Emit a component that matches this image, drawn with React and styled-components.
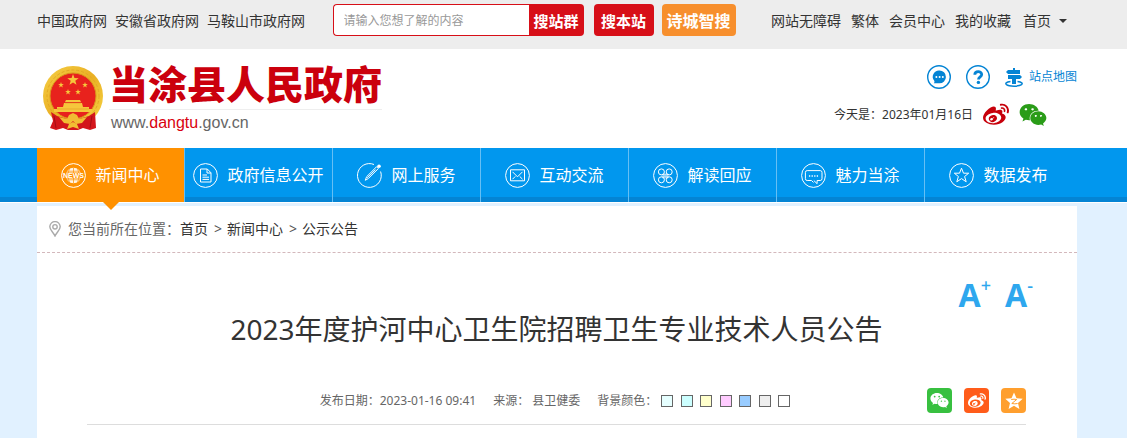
import styled, { createGlobalStyle } from "styled-components";
import { FaWeibo, FaWeixin } from "react-icons/fa";

const siteLinks = ["中国政府网", "安徽省政府网", "马鞍山市政府网"];
const userLinks = ["网站无障碍", "繁体", "会员中心", "我的收藏"];
const swatches = [
  { name: "浅青", color: "#e6ffff" },
  { name: "青色", color: "#ccffff" },
  { name: "黄色", color: "#ffffcc" },
  { name: "粉色", color: "#ffccff" },
  { name: "蓝色", color: "#99ccff" },
  { name: "灰色", color: "#eeeeee" },
  { name: "白色", color: "#ffffff" },
];

const GlobalStyle = createGlobalStyle`
  * {
    box-sizing: border-box;
  }
  body {
    margin: 0;
    background: #e1f1ff;
    color: #333;
    font: 14px/20px "Noto Sans", "Noto Sans CJK SC", sans-serif;
  }
  a {
    color: inherit;
    text-decoration: none;
  }
  button, input {
    font-family: inherit;
  }
  svg {
    display: block;
    flex: none;
  }
`;

const Star = ({ x, y, r }) => {
  const points = Array.from({ length: 10 }, (_, i) => {
    const d = i % 2 ? r * 0.4 : r;
    const a = (Math.PI / 5) * i - Math.PI / 2;
    return `${x + d * Math.cos(a)},${y + d * Math.sin(a)}`;
  }).join(" ");
  return <polygon points={points} />;
};

const Emblem = () => (
  <svg width="60" height="66" viewBox="0 0 60 66" aria-hidden="true">
    <defs>
      <linearGradient id="gold" x1="0" y1="0" x2="1" y2="1">
        <stop offset="0" stopColor="#f5cf45" />
        <stop offset="0.5" stopColor="#eab024" />
        <stop offset="1" stopColor="#f6d545" />
      </linearGradient>
    </defs>
    <circle cx="30" cy="30" r="30" fill="url(#gold)" />
    <circle cx="30" cy="30" r="26" fill="none" stroke="#e3a824" strokeWidth="1" strokeDasharray="3 2" />
    <circle cx="30" cy="30" r="23" fill="#e8221d" stroke="#d9971c" strokeWidth="1" />
    <g fill="#f6c63c">
      <Star x={30} y={14} r={6} />
      <Star x={18} y={19} r={3} />
      <Star x={42} y={19} r={3} />
      <Star x={25} y={26} r={3} />
      <Star x={35} y={26} r={3} />
      <path d="M23 34h14l1 2H22zM21 37h18l1 4H20zM14 41h32v2H14zM11 43h38v3H11z" />
    </g>
    <path d="M14 43h32M22 37h16" stroke="#e39b22" strokeWidth="0.6" />
    <path d="M8 46L14 50 24 53 30 49 36 53 46 50 52 46 53 62 47 64 40 62 35 64H25L20 62 13 64 7 62 10 55z" fill="#d3161c" />
    <path d="M16 51l8 2 2-4 4-2 4 2 2 4 8-2-5 6-6 1-3-3-3 3-6-1z" fill="#f1bd33" />
    <path d="M24 63l2-5 4-2 4 2 2 5-6-2z" fill="#f1bd33" />
    <path d="M11 50l2 12M49 50l-2 12" stroke="#a50e15" strokeWidth="1" />
  </svg>
);

const ring = <circle cx="12.5" cy="12.5" r="11.9" />;

const navIcons = {
  news: (
    <>
      {ring}
      <circle cx="12.5" cy="12.5" r="7.8" fill="currentColor" stroke="none" opacity="0.9" />
      <path d="M12.5 5v15M8.6 5.5c-2 4-2 10 0 14M16.4 5.5c2 4 2 10 0 14M5 8.2h15M5 16.8h15" stroke="#ff9100" strokeWidth="0.7" />
      <path d="M2.500 9.500h20v6h-20z" fill="#ff9100" stroke="none" />
      <text x="12.500" y="15" textAnchor="middle" fontSize="7" fontWeight="bold" fontFamily="Liberation Sans, sans-serif" fill="currentColor" stroke="none">
        NEWS
      </text>
    </>
  ),
  doc: (
    <>
      {ring}
      <path d="M7.5 6h6.8l3.7 3.8V19H7.5zM14 6v4h4M9.5 12h4.5M9.5 14.2h6.5M9.5 16.4h6.5" />
    </>
  ),
  pen: (
    <>
      <path d="M17 1.5A11.9 11.9 0 1 0 23.6 8.5" />
      <path d="M8.3 17.3l1.3-3.6L19.5 3.8l1.8 1.8-9.9 9.9zM10.3 14.8l8.2-8.2" />
      <circle cx="22" cy="3.2" r="1.8" fill="currentColor" stroke="none" />
    </>
  ),
  mail: (
    <>
      {ring}
      <path d="M5.5 6.8h14v11h-14zM7.5 8.8l5 5 5-5M7.5 16.2l2.8-2.8M17.5 16.2l-2.8-2.8" />
    </>
  ),
  clover: (
    <>
      {ring}
      <circle cx="8.4" cy="8.9" r="3" />
      <circle cx="16.2" cy="8.9" r="3" />
      <circle cx="8.4" cy="16.8" r="3" />
      <circle cx="16.2" cy="16.8" r="3" />
      <path d="M9.6 10.4h5.4v5.2H9.6z" fill="currentColor" fillOpacity="0.4" stroke="none" />
      <path d="M8.600 11.800h7.400M8.600 13.900h7.400" strokeOpacity="0.7" />
    </>
  ),
  chat: (
    <>
      {ring}
      <path d="M12.8 17.5l3.3 3.2v-3.2h3.1q1.8 0 1.8-1.8V9.4q0-1.8-1.8-1.8H6.2q-1.8 0-1.8 1.8v6.3q0 1.8 1.8 1.8h4.3l2 2" />
      <path d="M8.6 12.2v1.6M11.2 12.2v1.6M13.8 12.2v1.6M16.4 12.2v1.6" strokeWidth="1.3" />
    </>
  ),
  star: (
    <>
      {ring}
      <path d="M12.5 5.2l2 5h5.2l-4.1 3.3 1.6 5.3-4.7-3.2-4.7 3.2 1.6-5.3-4.1-3.3h5.2z" />
    </>
  ),
};

const navItems = [
  { label: "新闻中心", icon: "news", active: true },
  { label: "政府信息公开", icon: "doc" },
  { label: "网上服务", icon: "pen" },
  { label: "互动交流", icon: "mail" },
  { label: "解读回应", icon: "clover" },
  { label: "魅力当涂", icon: "chat" },
  { label: "数据发布", icon: "star" },
];

const NavIcon = ({ name }) => (
  <svg width="25" height="25" viewBox="0 0 25 25" fill="none" stroke="currentColor" strokeWidth="1" aria-hidden="true">
    {navIcons[name]}
  </svg>
);

const MessageIcon = () => (
  <svg width="24" height="24" viewBox="0 0 24 24" aria-hidden="true">
    <circle cx="12" cy="12" r="11.3" fill="none" stroke="#0484d4" strokeWidth="1.4" />
    <path d="M12.5 5.5a6.3 6.3 0 0 1 0 12.8H6.8q1-1 .6-2.3a6.3 6.3 0 0 1 5.1-10.5z" fill="#0484d4" />
    <g fill="#fff">
      <circle cx="9.4" cy="12" r="1" />
      <circle cx="12.6" cy="12" r="1" />
      <circle cx="15.8" cy="12" r="1" />
    </g>
  </svg>
);

const HelpIcon = () => (
  <svg width="24" height="24" viewBox="0 0 24 24" fill="none" stroke="#0484d4" aria-hidden="true">
    <circle cx="12" cy="12" r="11.3" strokeWidth="1.4" />
    <path d="M8.8 9.8c0-4.1 6.9-4 6.9-.3 0 2.4-3.2 2.4-3.2 5.1" strokeWidth="2.8" />
    <circle cx="12.4" cy="17.4" r="1.7" fill="#0484d4" stroke="none" />
  </svg>
);

const SitemapIcon = () => (
  <svg width="18" height="19" viewBox="0 0 18 19" fill="#0484d4" aria-hidden="true">
    <path d="M8 0h2v2h5v4H3L1 4l2-2h5zM3 7h12l2 2-2 2h-4v5H7v-5H3z" />
    <path d="M5.5 13.5C1 14 0 15.5 1.5 16.7c2.5 1.9 12.500 1.9 15 0 1.500-1.200.5-2.700-4-3.200" fill="none" stroke="#0484d4" strokeWidth="1.5" />
  </svg>
);

const PinIcon = () => (
  <svg width="12" height="16" viewBox="0 0 12 16" fill="none" stroke="#aaa" strokeWidth="1.4" aria-hidden="true">
    <path d="M6 15C4.500 11.500.8 8.800.8 5.800a5.200 5.200 0 0 1 10.400 0C11.200 8.800 7.500 11.500 6 15z" />
    <circle cx="6" cy="5.800" r="2.200" />
  </svg>
);

const QzoneIcon = () => (
  <svg width="18" height="18" viewBox="0 0 18 18" aria-hidden="true">
    <path d="M9 .5l2.500 5.700 6.200.6-4.700 4.100 1.400 6.100L9 13.800 3.600 17 5 10.900.3 6.800l6.200-.6z" fill="#fff" />
    <path d="M6.200 7.500q3-.6 5.500 0L6.800 11.500q3 .7 5.800 0" fill="none" stroke="#ff9f2e" strokeWidth="1" />
  </svg>
);

const App = () => {
  return (
    <>
      <GlobalStyle />
      <TopBar>
        <LinkGroup $gap={8}>
          {siteLinks.map((text) => (
            <a href="#" key={text}>{text}</a>
          ))}
        </LinkGroup>
        <Search onSubmit={(e) => e.preventDefault()}>
          <SearchBox>
            <SearchInput type="text" aria-label="搜索内容" placeholder="请输入您想了解的内容" />
            <SearchButton type="submit" $attached>搜站群</SearchButton>
          </SearchBox>
          <SearchButton type="button">搜本站</SearchButton>
          <SmartButton type="button">诗城智搜</SmartButton>
        </Search>
        <LinkGroup $gap={10} $end>
          {userLinks.map((text) => (
            <a href="#" key={text}>{text}</a>
          ))}
          <HomeMenu type="button">
            首页 <Caret />
          </HomeMenu>
        </LinkGroup>
      </TopBar>

      <Header>
        <Brand href="#">
          <Emblem />
          <BrandText>
            <BrandName>当涂县人民政府</BrandName>
            <BrandUrl>
              www.<em>dangtu</em>.gov.cn
            </BrandUrl>
          </BrandText>
        </Brand>
        <Tools>
          <ToolRow>
            <a href="#" aria-label="留言"><MessageIcon /></a>
            <a href="#" aria-label="帮助"><HelpIcon /></a>
            <SitemapLink href="#">
              <SitemapIcon />
              站点地图
            </SitemapLink>
          </ToolRow>
          <DateRow>
            <span>今天是：2023年01月16日</span>
            <a href="#" aria-label="微博"><FaWeibo size={26} color="#c7000b" /></a>
            <a href="#" aria-label="微信"><FaWeixin size={28} color="#2a9c18" /></a>
          </DateRow>
        </Tools>
      </Header>

      <Nav>
        <NavList>
          {navItems.map((item) => (
            <NavLink href="#" key={item.label} $active={item.active}>
              <NavIcon name={item.icon} />
              {item.label}
            </NavLink>
          ))}
        </NavList>
      </Nav>

      <Page>
        <Content>
          <Breadcrumb aria-label="当前位置">
            <PinIcon />
            <span>您当前所在位置：</span>
            <a href="#">首页</a>
            <i>&gt;</i>
            <a href="#">新闻中心</a>
            <i>&gt;</i>
            <a href="#">公示公告</a>
          </Breadcrumb>
          <Article>
            <FontTools>
              <FontButton type="button" aria-label="放大字体">A<sup>+</sup></FontButton>
              <FontButton type="button" aria-label="缩小字体">A<sup>-</sup></FontButton>
            </FontTools>
            <Title>2023年度护河中心卫生院招聘卫生专业技术人员公告</Title>
            <MetaRow>
              <Meta>
                <span>发布日期：2023-01-16 09:41</span>
                <span>来源： 县卫健委</span>
                <SwatchGroup>
                  背景颜色：
                  <Swatches>
                    {swatches.map((s) => (
                      <Swatch type="button" key={s.name} aria-label={s.name} $color={s.color} />
                    ))}
                  </Swatches>
                </SwatchGroup>
              </Meta>
              <Share>
                <ShareButton type="button" aria-label="分享到微信" $color="#38c040">
                  <FaWeixin size={19} />
                </ShareButton>
                <ShareButton type="button" aria-label="分享到微博" $color="#ff5c1a">
                  <FaWeibo size={18} />
                </ShareButton>
                <ShareButton type="button" aria-label="分享到QQ空间" $color="#ff9f2e">
                  <QzoneIcon />
                </ShareButton>
              </Share>
            </MetaRow>
          </Article>
        </Content>
      </Page>
    </>
  );
};

const Band = styled.div`
  padding: 0 50px 0 37px;
`;

const TopBar = styled(Band)`
  display: flex;
  justify-content: space-between;
  background: #ededed;
  padding-top: 4px;
  padding-bottom: 13px;
`;

const LinkGroup = styled.nav`
  display: flex;
  align-items: center;
  gap: ${({ $gap }) => $gap}px;
  padding-top: 2px;
  padding-right: ${({ $end }) => ($end ? 10 : 0)}px;
  white-space: nowrap;
`;

const Search = styled.form`
  display: flex;
  gap: 8px;
  margin-right: 8px;
`;

const SearchBox = styled.div`
  display: flex;
  margin-right: 2px;
`;

const SearchInput = styled.input`
  width: 196px;
  height: 32px;
  padding: 0 10px;
  border: 1px solid #d70f18;
  border-right: 0;
  border-radius: 4px 0 0 4px;
  background: #fff;
  font-size: 12px;
  outline: none;

  &::placeholder {
    color: #999;
  }
`;

const SearchButton = styled.button`
  width: ${({ $attached }) => ($attached ? 55 : 60)}px;
  height: 32px;
  padding: 0;
  border: 0;
  border-radius: ${({ $attached }) => ($attached ? "0 4px 4px 0" : "4px")};
  background: #d70f18;
  color: #fff;
  font-size: 15px;
  font-weight: bold;
  cursor: pointer;
`;

const SmartButton = styled(SearchButton)`
  width: 74px;
  background: #f78f2d;
  font-size: 16px;
`;

const HomeMenu = styled.button`
  display: flex;
  align-items: center;
  gap: 8px;
  margin-left: 2px;
  padding: 0;
  border: 0;
  background: none;
  color: inherit;
  font-size: 14px;
  line-height: 20px;
`;

const Caret = styled.span`
  border: 4px solid transparent;
  border-top-color: #333;
  border-bottom: 0;
`;

const Header = styled(Band).attrs({ as: "header" })`
  display: flex;
  justify-content: space-between;
  background: #fff;
  padding-top: 14px;
  padding-bottom: 14px;
`;

const Brand = styled.a`
  display: flex;
  align-items: center;
  gap: 6px;
  padding-left: 6px;
`;

const BrandText = styled.div`
  display: flex;
  flex-direction: column;
`;

const BrandName = styled.strong`
  padding-bottom: 4px;
  border-bottom: 1px solid #eee;
  color: #cb000d;
  font-size: 39px;
  font-weight: 900;
  line-height: 42px;
`;

const BrandUrl = styled.span`
  padding: 2px 2px 0;
  color: #666;
  font-family: "Liberation Sans", sans-serif;
  font-size: 16px;
  line-height: 22px;

  em {
    color: #d9000f;
    font-style: normal;
  }
`;

const Tools = styled.div`
  display: flex;
  flex-direction: column;
  gap: 12px;
  padding-top: 2px;
  font-size: 12px;
`;

const ToolRow = styled.div`
  display: flex;
  align-items: center;
  justify-content: flex-end;
  gap: 15px;
`;

const SitemapLink = styled.a`
  display: flex;
  align-items: center;
  gap: 6px;
  color: #0484d4;
`;

const DateRow = styled.div`
  display: flex;
  align-items: center;
  gap: 10px;
  padding-right: 30px;
`;

const Nav = styled(Band).attrs({ as: "nav" })`
  background: linear-gradient(#0197ee 49px, #0484d4 49px);
`;

const NavList = styled.div`
  display: flex;
  padding-right: 4px;
`;

const NavLink = styled.a`
  position: relative;
  display: flex;
  flex: 1;
  align-items: center;
  justify-content: center;
  gap: 9px;
  height: 54px;
  background: ${({ $active }) => ($active ? "#ff9100" : "none")};
  border-right: 1px solid #66bff4;
  color: #fff;
  font-size: 16px;
  white-space: nowrap;

  &:last-child {
    border-right-color: transparent;
  }

  &::after {
    content: "";
    display: ${({ $active }) => ($active ? "block" : "none")};
    position: absolute;
    top: 100%;
    left: 50%;
    margin-left: -8px;
    border: 8px solid transparent;
    border-top-color: #ff9100;
    border-bottom: 0;
  }
`;

const Page = styled(Band).attrs({ as: "main" })`
  border-top: 1px solid #fff;
  padding-top: 3px;
`;

const Content = styled.div`
  background: #fff;
`;

const Breadcrumb = styled.nav`
  display: flex;
  align-items: center;
  padding: 13px 12px;
  border-bottom: 1px dashed #d3b8bc;

  span {
    margin-left: 7px;
    color: #666;
  }
  i {
    padding: 0 5px 0 6px;
    color: #555;
    font-style: normal;
  }
`;

const Article = styled.article`
  padding: 25px 51px 13px 50px;
`;

const FontTools = styled.div`
  display: flex;
  justify-content: flex-end;
  gap: 14px;
  margin-right: -7px;
`;

const FontButton = styled.button`
  display: flex;
  padding: 0;
  border: 0;
  background: none;
  color: #2ea7ee;
  font-size: 32px;
  font-weight: bold;
  line-height: 34px;

  sup {
    font-size: 18px;
    font-weight: 500;
    line-height: 14px;
  }
`;

const Title = styled.h1`
  margin: 0;
  font-size: 28px;
  font-weight: normal;
  line-height: 34px;
  text-align: center;
`;

const MetaRow = styled.div`
  display: flex;
  justify-content: space-between;
  align-items: center;
  margin-top: 42px;
  padding-bottom: 11px;
  border-bottom: 1px solid #ddd;
`;

const Meta = styled.div`
  display: flex;
  flex: 1;
  justify-content: center;
  gap: 17px;
  padding-left: 96px;
  color: #666;
  font-size: 12px;
`;

const SwatchGroup = styled.div`
  display: flex;
  align-items: center;
`;

const Swatches = styled.div`
  display: flex;
  justify-content: space-between;
  width: 129px;
  margin-left: 4px;
`;

const Swatch = styled.button`
  width: 12px;
  height: 12px;
  padding: 0;
  border: 1px solid #666;
  background: ${({ $color }) => $color};
`;

const Share = styled.div`
  display: flex;
  gap: 12px;
`;

const ShareButton = styled.button`
  display: flex;
  align-items: center;
  justify-content: center;
  width: 25px;
  height: 25px;
  padding: 0;
  border: 0;
  border-radius: 4px;
  background: ${({ $color }) => $color};
  color: #fff;
`;

export default App;
